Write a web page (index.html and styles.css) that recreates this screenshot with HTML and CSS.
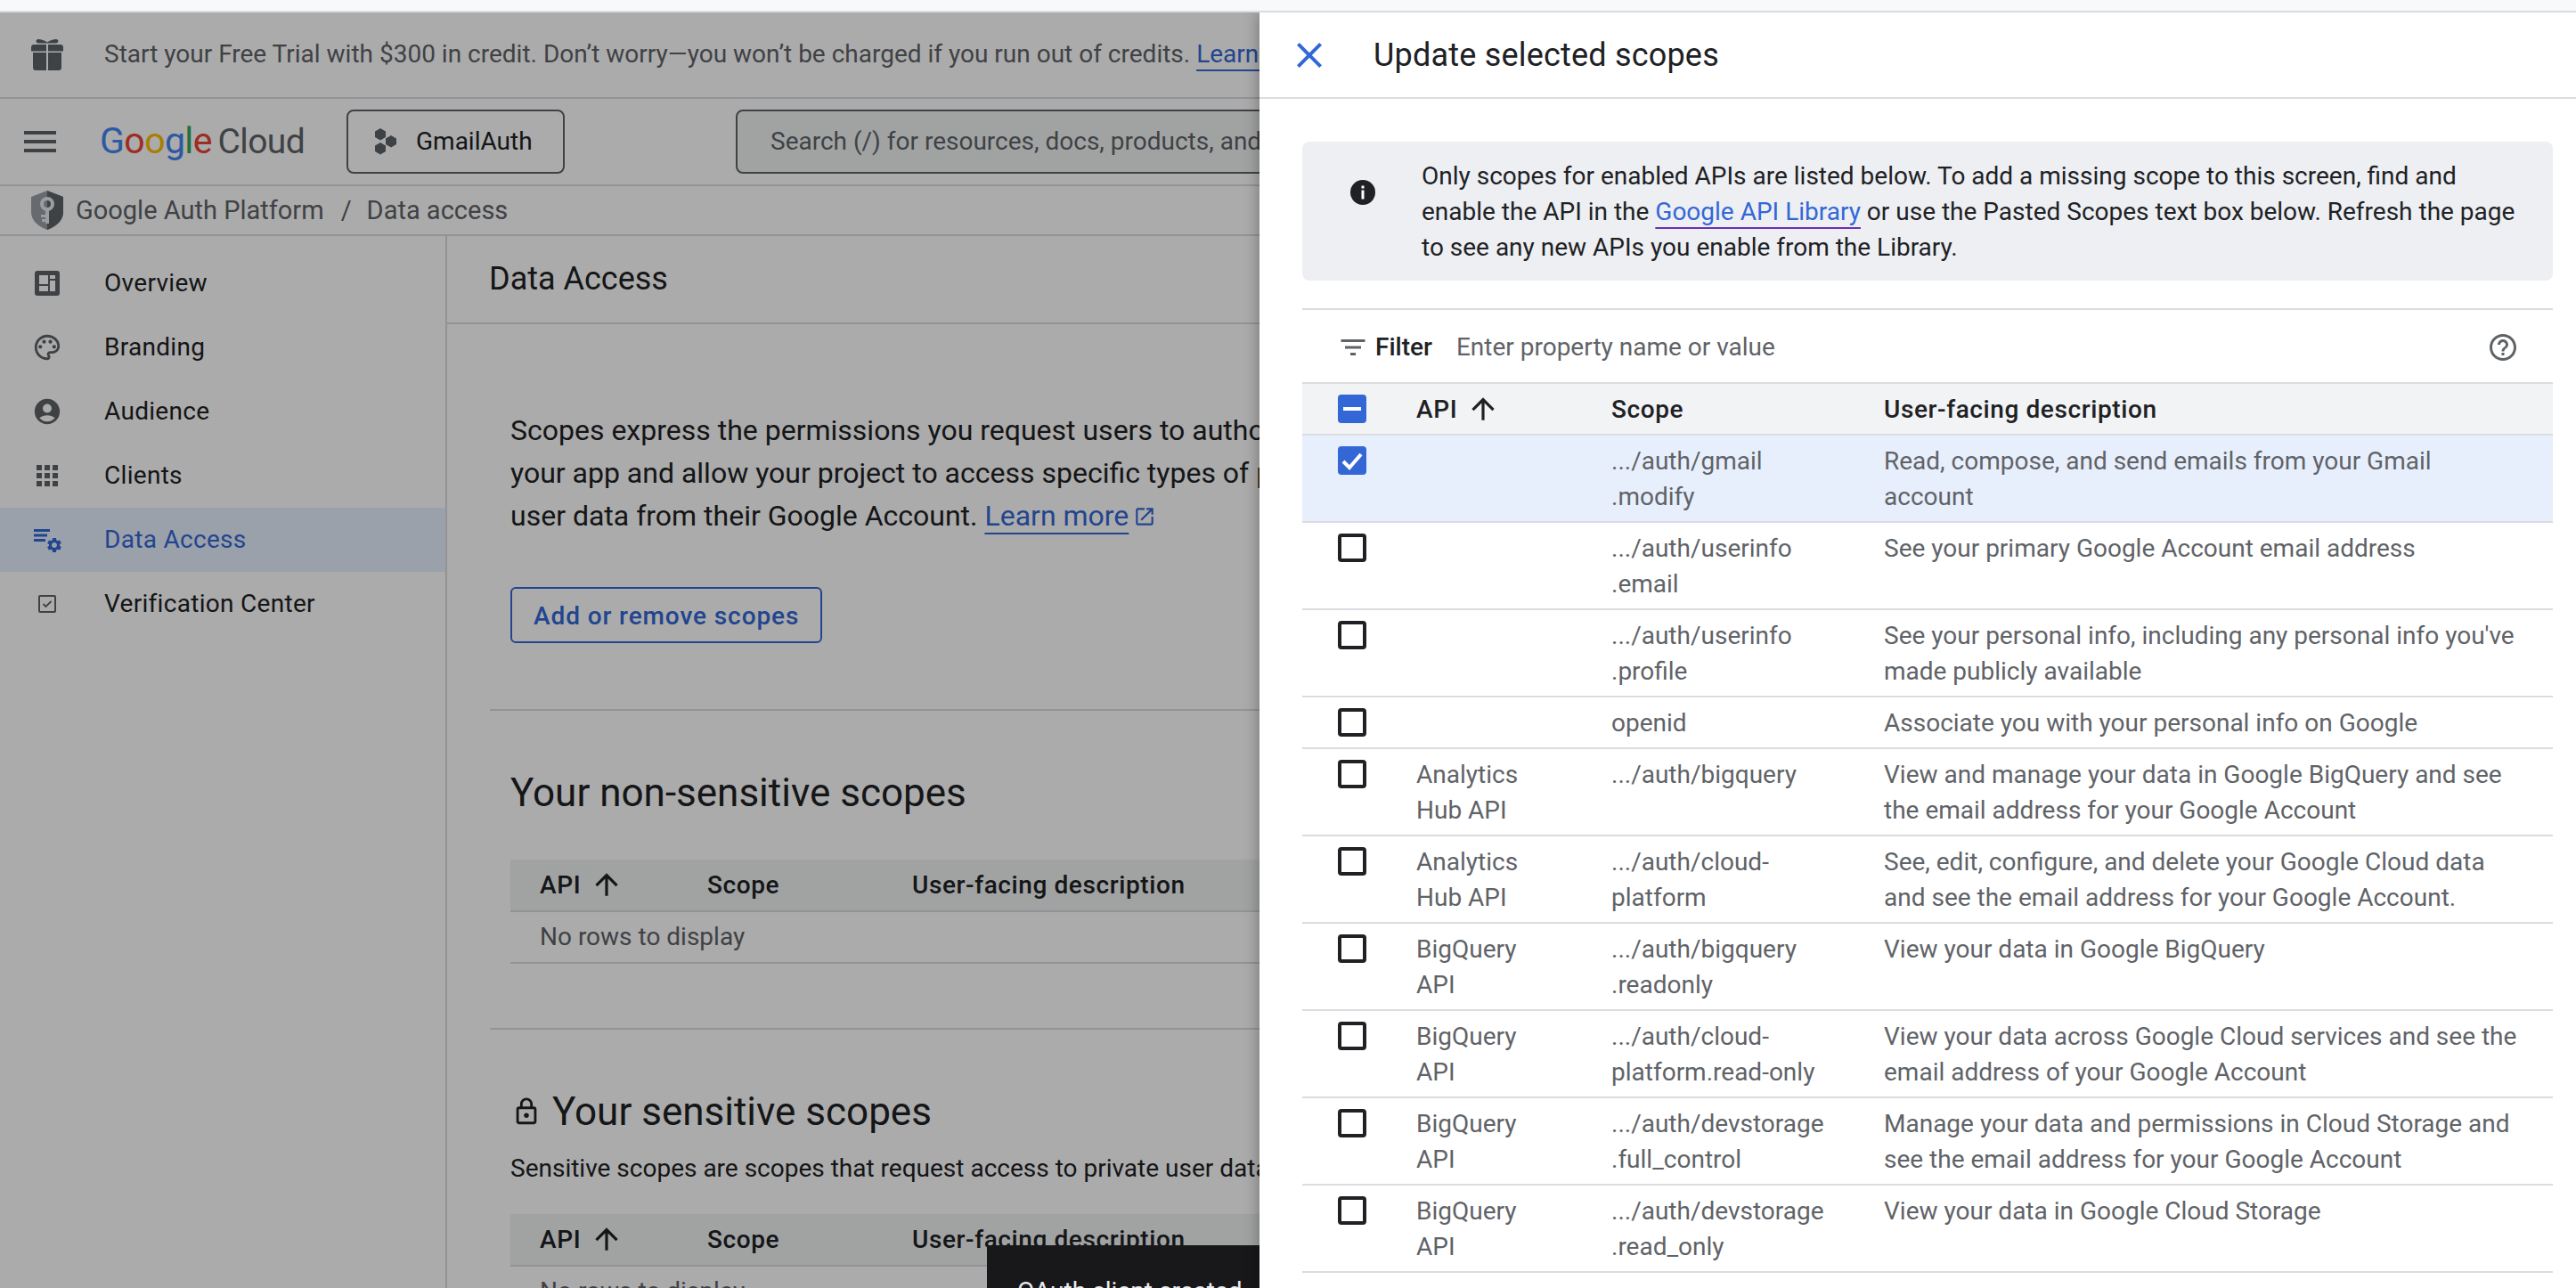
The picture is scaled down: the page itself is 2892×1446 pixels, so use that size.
FILE: index.html
```html
<!DOCTYPE html>
<html lang="en">
<head>
    <meta charset="UTF-8">
    <meta name="viewport" content="width=device-width, initial-scale=1.0">
    <title>Data access - Google Auth Platform</title>
    <link rel="stylesheet" href="styles.css">
</head>
<body>
    <div class="top-strip"></div>
    <div class="app">
        <div class="banner">
            <svg class="gift-icon" viewBox="0 0 36 36"><path d="M8 1c3 0 7 1.500 10 3.500C21 2.500 25 1 28 1c3 0 3.500 4 0 4.500H8C4.500 5 5 1 8 1z"/><path d="M3 7h14v7.500H0V10c0-1.700 1.300-3 3-3zM19 7h14c1.700 0 3 1.300 3 3v4.500H19zM2 16h15v20H5c-1.700 0-3-1.300-3-3zM19 16h15v17c0 1.700-1.300 3-3 3H19z"/></svg>
            <span class="banner-text">Start your Free Trial with $300 in credit. Don’t worry—you won’t be charged if you run out of credits. <a class="link" href="#">Learn more</a></span>
        </div>
        <div class="nav">
            <div class="hamburger"><span></span><span></span><span></span></div>
            <div class="logo"><span class="g-blue">G</span><span class="g-red">o</span><span class="g-yellow">o</span><span class="g-blue">g</span><span class="g-green">l</span><span class="g-red">e</span> <span class="logo-cloud">Cloud</span></div>
            <div class="project-btn">
                <svg class="project-icon" viewBox="0 0 26 30"><polygon points="7,0 13,3.500 13,10 7,13.500 1,10 1,3.500"/><polygon points="19,8 25,11.500 25,18 19,21.500 13,18 13,11.500"/><polygon points="7,16 13,19.500 13,26 7,29.500 1,26 1,19.500"/></svg>
                <span>GmailAuth</span>
            </div>
            <div class="search">Search (/) for resources, docs, products, and more</div>
        </div>
        <div class="crumbs">
            <svg class="shield-icon" viewBox="0 0 36 44"><path d="M18 0L36 7v17c0 10-8 16-18 20C8 40 0 34 0 24V7z" fill="#9aa0a6"/><path d="M18 0L36 7v17c0 10-8 16-18 20z" fill="#5f6368"/><circle cx="18" cy="15" r="6" fill="none" stroke="#e8eaed" stroke-width="4"/><path d="M16 20h4v17h-4zM11 27h6v3h-6zM12 32h5v3h-5z" fill="#e8eaed"/></svg>
            <span>Google Auth Platform</span>
            <span class="crumb-sep">/</span>
            <span>Data access</span>
        </div>
        <div class="main">
            <div class="sidebar">
                <div class="side-item">
                    <svg class="side-icon" viewBox="0 0 34 34"><rect x="3" y="3" width="28" height="28" rx="3" fill="#5f6368"/><path d="M8 8h10v10H8zM20 8h6v4h-6zM20 14h6v12h-6zM8 20h10v6H8z" fill="#fff"/></svg>
                    Overview
                </div>
                <div class="side-item">
                    <svg class="side-icon" viewBox="0 0 24 24"><path d="M12 22C6.490 22 2 17.510 2 12S6.490 2 12 2s10 4.040 10 9c0 3.310-2.690 6-6 6h-1.770c-.28 0-.5.220-.5.500 0 .12.050.23.130.33.410.47.640 1.060.640 1.670 0 1.380-1.120 2.500-2.500 2.500zm0-18c-4.410 0-8 3.590-8 8s3.590 8 8 8c.28 0 .5-.22.5-.5 0-.16-.08-.28-.14-.35-.41-.46-.63-1.050-.63-1.650 0-1.380 1.120-2.500 2.500-2.500H16c2.210 0 4-1.790 4-4 0-3.860-3.590-7-8-7z"/><circle cx="6.500" cy="11.500" r="1.500"/><circle cx="9.500" cy="7.500" r="1.500"/><circle cx="14.500" cy="7.500" r="1.500"/><circle cx="17.500" cy="11.500" r="1.500"/></svg>
                    Branding
                </div>
                <div class="side-item">
                    <svg class="side-icon" viewBox="0 0 24 24"><path d="M12 2C6.480 2 2 6.480 2 12s4.480 10 10 10 10-4.480 10-10S17.520 2 12 2zm0 4c1.930 0 3.500 1.570 3.500 3.500S13.930 13 12 13s-3.500-1.570-3.500-3.500S10.070 6 12 6zm0 14c-2.030 0-4.430-.82-6.140-2.880C7.550 15.800 9.680 15 12 15s4.450.8 6.140 2.120C16.430 19.180 14.030 20 12 20z"/></svg>
                    Audience
                </div>
                <div class="side-item">
                    <svg class="side-icon" viewBox="0 0 34 34"><path d="M5 5h6v6H5zM14 5h6v6h-6zM23 5h6v6h-6zM5 14h6v6H5zM14 14h6v6h-6zM23 14h6v6h-6zM5 23h6v6H5zM14 23h6v6h-6zM23 23h6v6h-6z"/></svg>
                    Clients
                </div>
                <div class="side-item side-item-active">
                    <svg class="side-icon" viewBox="0 0 34 34">
                        <path d="M2 5h18v3H2zM2 10.500h15v3H2zM2 16h13v3H2z"/>
                        <svg x="15" y="13" width="20" height="20" viewBox="0 0 24 24"><path d="M19.140 12.940c.04-.3.060-.61.060-.94 0-.32-.02-.64-.07-.94l2.030-1.580c.18-.14.230-.41.120-.61l-1.920-3.320c-.12-.22-.37-.29-.59-.22l-2.390.96c-.5-.38-1.030-.7-1.620-.94l-.36-2.540c-.04-.24-.24-.41-.48-.41h-3.840c-.24 0-.43.170-.47.410l-.36 2.540c-.59.240-1.130.570-1.620.940l-2.390-.96c-.22-.08-.47 0-.59.220L2.740 8.870c-.12.210-.08.470.120.610l2.030 1.580c-.05.3-.09.630-.09.940s.020.640.070.940l-2.030 1.580c-.18.140-.23.410-.12.610l1.920 3.320c.12.220.370.290.590.220l2.390-.96c.5.380 1.030.7 1.620.94l.36 2.540c.05.240.240.410.480.410h3.840c.24 0 .44-.17.470-.41l.36-2.540c.59-.24 1.130-.56 1.620-.94l2.390.96c.22.080.47 0 .59-.22l1.920-3.320c.12-.22.070-.47-.12-.61l-2.010-1.580zM12 15.600c-1.980 0-3.600-1.620-3.600-3.600s1.620-3.600 3.600-3.600 3.600 1.620 3.600 3.600-1.620 3.600-3.600 3.600z"/></svg>
                    </svg>
                    Data Access
                </div>
                <div class="side-item">
                    <svg class="side-icon" viewBox="0 0 34 34"><rect x="8" y="8" width="18" height="18" rx="1" fill="none" stroke="#5f6368" stroke-width="2"/><path d="M12.500 17l3 3 6-6" fill="none" stroke="#5f6368" stroke-width="1.800"/></svg>
                    Verification Center
                </div>
            </div>
            <div class="content">
                <div class="content-head">Data Access</div>
                <div class="content-body">
                    <p class="intro">Scopes express the permissions you request users to authorize for your<br>your app and allow your project to access specific types of private<br>user data from their Google Account. <a class="link" href="#">Learn more</a><svg class="ext-icon" viewBox="0 0 24 24"><path d="M19 19H5V5h7V3H5c-1.110 0-2 .9-2 2v14c0 1.100.89 2 2 2h14c1.100 0 2-.9 2-2v-7h-2v7zM14 3v2h3.590l-9.830 9.830 1.410 1.410L19 6.410V10h2V3h-7z"/></svg></p>
                    <button class="outline-btn">Add or remove scopes</button>
                </div>
                <div class="section">
                    <h2 class="section-title">Your non-sensitive scopes</h2>
                    <table class="mini-table">
                        <colgroup><col class="mini-api"><col class="mini-scope"><col></colgroup>
                        <tr><th>API<svg class="sort-icon" viewBox="0 0 24 24"><path d="M4 12l1.410 1.410L11 7.830V20h2V7.830l5.580 5.590L20 12l-8-8-8 8z"/></svg></th><th>Scope</th><th>User-facing description</th></tr>
                        <tr><td colspan="3">No rows to display</td></tr>
                    </table>
                </div>
                <div class="section">
                    <h2 class="section-title"><svg class="lock-icon" viewBox="0 0 24 24"><path d="M18 8h-1V6c0-2.760-2.240-5-5-5S7 3.240 7 6v2H6c-1.100 0-2 .9-2 2v10c0 1.100.9 2 2 2h12c1.100 0 2-.9 2-2V10c0-1.100-.9-2-2-2zM9 6c0-1.660 1.340-3 3-3s3 1.340 3 3v2H9V6zm9 14H6V10h12v10zm-6-3c1.100 0 2-.9 2-2s-.9-2-2-2-2 .9-2 2 .9 2 2 2z"/></svg>Your sensitive scopes</h2>
                    <p class="section-note">Sensitive scopes are scopes that request access to private user data.</p>
                    <table class="mini-table">
                        <colgroup><col class="mini-api"><col class="mini-scope"><col></colgroup>
                        <tr><th>API<svg class="sort-icon" viewBox="0 0 24 24"><path d="M4 12l1.410 1.410L11 7.830V20h2V7.830l5.580 5.590L20 12l-8-8-8 8z"/></svg></th><th>Scope</th><th>User-facing description</th></tr>
                        <tr><td colspan="3">No rows to display</td></tr>
                    </table>
                </div>
            </div>
        </div>
        <div class="scrim"></div>
        <div class="toast">OAuth client created</div>
        <div class="panel">
            <div class="panel-head">
                <svg class="close-icon" viewBox="0 0 24 24"><path d="M19 6.410L17.590 5 12 10.590 6.410 5 5 6.410 10.590 12 5 17.590 6.410 19 12 13.410 17.590 19 19 17.590 13.410 12z"/></svg>
                <span>Update selected scopes</span>
            </div>
            <div class="panel-body">
                <div class="info-box">
                    <svg class="info-icon" viewBox="0 0 28 28"><circle cx="14" cy="14" r="14" fill="#202124"/><path d="M12.500 6.500h3v3h-3zM12.500 11.500h3v10h-3z" fill="#fff"/></svg>
                    <div>Only scopes for enabled APIs are listed below. To add a missing scope to this screen, find and enable the API in the <a class="link link-visited" href="#">Google API Library</a> or use the Pasted Scopes text box below. Refresh the page to see any new APIs you enable from the Library.</div>
                </div>
                <div class="filter-row">
                    <svg class="filter-icon" viewBox="0 0 24 24"><path d="M10 18h4v-2h-4v2zM3 6v2h18V6H3zm3 7h12v-2H6v2z"/></svg>
                    <span class="filter-label">Filter</span>
                    <span class="filter-hint">Enter property name or value</span>
                    <svg class="help-icon" viewBox="0 0 24 24"><path d="M11 18h2v-2h-2v2zm1-16C6.480 2 2 6.480 2 12s4.480 10 10 10 10-4.480 10-10S17.520 2 12 2zm0 18c-4.410 0-8-3.590-8-8s3.590-8 8-8 8 3.590 8 8-3.590 8-8 8zm0-14c-2.210 0-4 1.790-4 4h2c0-1.100.9-2 2-2s2 .9 2 2c0 2-3 1.750-3 5h2c0-2.250 3-2.500 3-5 0-2.210-1.790-4-4-4z"/></svg>
                </div>
                <table class="scope-table">
                    <colgroup><col class="col-check"><col class="col-api"><col class="col-scope"><col></colgroup>
                    <tr>
                        <th><span class="cb cb-mixed"></span></th>
                        <th>API<svg class="sort-icon" viewBox="0 0 24 24"><path d="M4 12l1.410 1.410L11 7.830V20h2V7.830l5.580 5.590L20 12l-8-8-8 8z"/></svg></th>
                        <th>Scope</th>
                        <th>User-facing description</th>
                    </tr>
                    <tr class="row-selected">
                        <td><span class="cb cb-checked"><svg viewBox="0 0 32 32"><path d="M6 17l7 7 13-15" fill="none" stroke="#fff" stroke-width="4"/></svg></span></td>
                        <td></td>
                        <td>.../auth/gmail<br>.modify</td>
                        <td>Read, compose, and send emails from your Gmail account</td>
                    </tr>
                    <tr>
                        <td><span class="cb"></span></td>
                        <td></td>
                        <td>.../auth/userinfo<br>.email</td>
                        <td>See your primary Google Account email address</td>
                    </tr>
                    <tr>
                        <td><span class="cb"></span></td>
                        <td></td>
                        <td>.../auth/userinfo<br>.profile</td>
                        <td>See your personal info, including any personal info you've made publicly available</td>
                    </tr>
                    <tr>
                        <td><span class="cb"></span></td>
                        <td></td>
                        <td>openid</td>
                        <td>Associate you with your personal info on Google</td>
                    </tr>
                    <tr>
                        <td><span class="cb"></span></td>
                        <td>Analytics<br>Hub API</td>
                        <td>.../auth/bigquery</td>
                        <td>View and manage your data in Google BigQuery and see the email address for your Google Account</td>
                    </tr>
                    <tr>
                        <td><span class="cb"></span></td>
                        <td>Analytics<br>Hub API</td>
                        <td>.../auth/cloud-<br>platform</td>
                        <td>See, edit, configure, and delete your Google Cloud data and see the email address for your Google Account.</td>
                    </tr>
                    <tr>
                        <td><span class="cb"></span></td>
                        <td>BigQuery<br>API</td>
                        <td>.../auth/bigquery<br>.readonly</td>
                        <td>View your data in Google BigQuery</td>
                    </tr>
                    <tr>
                        <td><span class="cb"></span></td>
                        <td>BigQuery<br>API</td>
                        <td>.../auth/cloud-<br>platform.read-only</td>
                        <td>View your data across Google Cloud services and see the email address of your Google Account</td>
                    </tr>
                    <tr>
                        <td><span class="cb"></span></td>
                        <td>BigQuery<br>API</td>
                        <td>.../auth/devstorage<br>.full_control</td>
                        <td>Manage your data and permissions in Cloud Storage and see the email address for your Google Account</td>
                    </tr>
                    <tr>
                        <td><span class="cb"></span></td>
                        <td>BigQuery<br>API</td>
                        <td>.../auth/devstorage<br>.read_only</td>
                        <td>View your data in Google Cloud Storage</td>
                    </tr>
                </table>
            </div>
        </div>
    </div>
</body>
</html>
```

FILE: styles.css
```css
* {
    box-sizing: border-box;
}
html, body {
    height: 100%;
}
body {
    margin: 0;
    display: flex;
    flex-direction: column;
    overflow: hidden;
    background: #fff;
    color: #202124;
    font-family: Roboto, "Liberation Sans", sans-serif;
    font-size: 28px;
    line-height: 40px;
}
svg {
    flex-shrink: 0;
    fill: #5f6368;
}
.top-strip {
    height: 14px;
    background: #f8f9fa;
    border-bottom: 2px solid #dadce0;
}
.app {
    position: relative;
    flex: 1;
    display: flex;
    flex-direction: column;
    min-height: 0;
    overflow: hidden;
}
.link {
    color: #3367d6;
    text-decoration: underline;
    text-underline-offset: 8px;
    text-decoration-thickness: 2px;
}
.link-visited {
    text-decoration-color: #6a2fb5;
}

/* header rows */
.banner {
    height: 97px;
    flex-shrink: 0;
    display: flex;
    align-items: center;
    padding: 0 0 2px 35px;
    border-bottom: 2px solid #dadce0;
    white-space: nowrap;
}
.gift-icon {
    width: 36px;
    height: 36px;
    margin-right: 46px;
}
.banner-text {
    color: #5f6368;
}
.nav {
    height: 98px;
    flex-shrink: 0;
    display: flex;
    align-items: center;
    padding: 0 0 1px 27px;
    border-bottom: 2px solid #dadce0;
}
.hamburger {
    width: 36px;
    margin-right: 49px;
}
.hamburger span {
    display: block;
    height: 4px;
    margin: 6px 0;
    background: #5f6368;
}
.logo {
    width: 277px;
    font-size: 41px;
    letter-spacing: -0.6px;
    word-spacing: -3px;
    white-space: nowrap;
}
.g-blue { color: #4285f4; }
.g-red { color: #ea4335; }
.g-yellow { color: #fbbc04; }
.g-green { color: #34a853; }
.logo-cloud {
    color: #5f6368;
    font-size: 39px;
}
.project-btn {
    width: 245px;
    height: 72px;
    display: flex;
    align-items: center;
    padding-left: 29px;
    border: 2px solid #5f6368;
    border-radius: 8px;
}
.project-icon {
    width: 26px;
    height: 30px;
    margin-right: 21px;
}
.search {
    height: 72px;
    width: 1200px;
    margin-left: 192px;
    display: flex;
    align-items: center;
    padding-left: 37px;
    background: #f1f3f4;
    color: #5f6368;
    border: 2px solid #5f6368;
    border-radius: 8px;
    white-space: nowrap;
}
.crumbs {
    height: 56px;
    flex-shrink: 0;
    display: flex;
    align-items: center;
    padding-left: 35px;
    border-bottom: 2px solid #dadce0;
    color: #5f6368;
    font-size: 29px;
}
.shield-icon {
    width: 36px;
    height: 44px;
    margin-right: 14px;
}
.crumb-sep {
    margin: 0 17px 0 19px;
}

/* sidebar */
.main {
    flex: 1;
    display: flex;
    min-height: 0;
}
.sidebar {
    width: 502px;
    flex-shrink: 0;
    padding-top: 17px;
    border-right: 2px solid #dadce0;
}
.side-item {
    height: 72px;
    display: flex;
    align-items: center;
    padding-left: 36px;
    letter-spacing: 0.3px;
}
.side-icon {
    width: 34px;
    height: 34px;
    margin-right: 47px;
}
.side-item-active {
    background: #e8f0fe;
    color: #3367d6;
}
.side-item-active svg {
    fill: #3367d6;
}

/* page content */
.content {
    flex: 1;
    min-width: 0;
    overflow: hidden;
}
.content-head {
    height: 99px;
    padding: 26px 0 0 47px;
    border-bottom: 2px solid #dadce0;
    font-size: 36px;
    line-height: 44px;
}
.content-body {
    height: 432px;
    padding: 95px 0 0 71px;
}
.intro {
    margin: 0 0 56px;
    font-size: 32px;
    line-height: 48px;
    white-space: nowrap;
}
.ext-icon {
    width: 26px;
    height: 26px;
    margin-left: 5px;
    vertical-align: -3px;
    fill: #3367d6;
}
.outline-btn {
    height: 63px;
    padding: 2px 24px 0;
    background: transparent;
    border: 2px solid #3367d6;
    border-radius: 6px;
    color: #3367d6;
    font: 500 28px Roboto, sans-serif;
    letter-spacing: 0.9px;
}
.section {
    margin-left: 48px;
    padding: 64px 0 72px 23px;
    border-top: 2px solid #dadce0;
}
.section-title {
    display: flex;
    align-items: center;
    margin: 0 0 47px;
    font-size: 44px;
    font-weight: 400;
    line-height: 56px;
    white-space: nowrap;
}
.section-note {
    margin: -31px 0 31px;
    white-space: nowrap;
}
.lock-icon {
    width: 34px;
    height: 34px;
    margin: 0 12px 0 1px;
    fill: #202124;
}
.mini-table {
    width: 1000px;
    table-layout: fixed;
    border-collapse: separate;
    border-spacing: 0;
}
.mini-api { width: 221px; }
.mini-scope { width: 230px; }
.mini-table th {
    height: 59px;
    padding: 0 0 0 33px;
    background: #f1f3f4;
    border-bottom: 2px solid #dadce0;
    font-weight: 500;
    letter-spacing: 0.6px;
    text-align: left;
    white-space: nowrap;
}
.mini-table th + th {
    padding-left: 0;
}
.mini-table td {
    height: 58px;
    padding: 0 0 0 33px;
    border-bottom: 2px solid #dadce0;
    color: #5f6368;
}
.sort-icon {
    width: 38px;
    height: 38px;
    margin-left: 10px;
    vertical-align: -9px;
    fill: #202124;
}

/* overlay things */
.scrim {
    position: absolute;
    inset: 0;
    background: rgba(0, 0, 0, 0.33);
}
.toast {
    position: absolute;
    left: 1108px;
    top: 1384px;
    width: 500px;
    height: 120px;
    padding: 32px 34px;
    background: #18181a;
    color: #e8eaed;
}
.panel {
    position: absolute;
    top: 0;
    right: 0;
    bottom: 0;
    width: 1478px;
    background: #fff;
    box-shadow: 0 0 16px rgba(0, 0, 0, 0.35);
}
.panel-head {
    height: 97px;
    display: flex;
    align-items: center;
    padding: 0 0 0 32px;
    border-bottom: 2px solid #dadce0;
    font-size: 36px;
    line-height: 44px;
    letter-spacing: 0.2px;
}
.close-icon {
    width: 48px;
    height: 48px;
    margin-right: 48px;
    fill: #3367d6;
}
.panel-body {
    padding: 48px 26px 0 48px;
}
.info-box {
    display: flex;
    padding: 19px 30px 17px 54px;
    background: #edeff3;
    border-radius: 8px;
}
.info-icon {
    width: 28px;
    height: 28px;
    margin: 24px 52px 0 0;
}
.filter-row {
    height: 83px;
    margin-top: 31px;
    display: flex;
    align-items: center;
    padding: 2px 38px 0 39px;
    border-top: 2px solid #dadce0;
}
.filter-icon {
    width: 36px;
    height: 36px;
    margin-right: 7px;
}
.filter-label {
    font-weight: 500;
    margin-right: 27px;
}
.filter-hint {
    flex: 1;
    color: #5f6368;
}
.help-icon {
    width: 36px;
    height: 36px;
}

/* scopes table */
.scope-table {
    width: 100%;
    table-layout: fixed;
    border-collapse: separate;
    border-spacing: 0;
}
.col-check { width: 128px; }
.col-api { width: 219px; }
.col-scope { width: 306px; }
.scope-table th {
    height: 60px;
    padding: 2px 0 0;
    background: #f1f3f4;
    border-top: 2px solid #dadce0;
    border-bottom: 2px solid #dadce0;
    font-weight: 500;
    letter-spacing: 0.6px;
    text-align: left;
}
.scope-table td {
    padding: 9px 36px 7px 0;
    border-bottom: 2px solid #dadce0;
    color: #5f6368;
    vertical-align: top;
}
.scope-table th:first-child,
.scope-table td:first-child {
    padding-left: 40px;
}
.scope-table td:not(:last-child) {
    padding-right: 0;
}
.row-selected td {
    background: #e8effc;
}
.cb {
    display: block;
    width: 32px;
    height: 32px;
    border: 4px solid #202124;
    border-radius: 4px;
}
.scope-table td .cb {
    margin-top: 3px;
}
.scope-table th .cb {
    margin-top: -2px;
}
.cb-mixed,
.cb-checked {
    position: relative;
    border: none;
    background: #3367d6;
}
.cb-mixed::after {
    content: "";
    position: absolute;
    left: 6px;
    top: 14px;
    width: 20px;
    height: 4px;
    background: #fff;
}
.cb-checked svg {
    display: block;
    width: 32px;
    height: 32px;
}
```
